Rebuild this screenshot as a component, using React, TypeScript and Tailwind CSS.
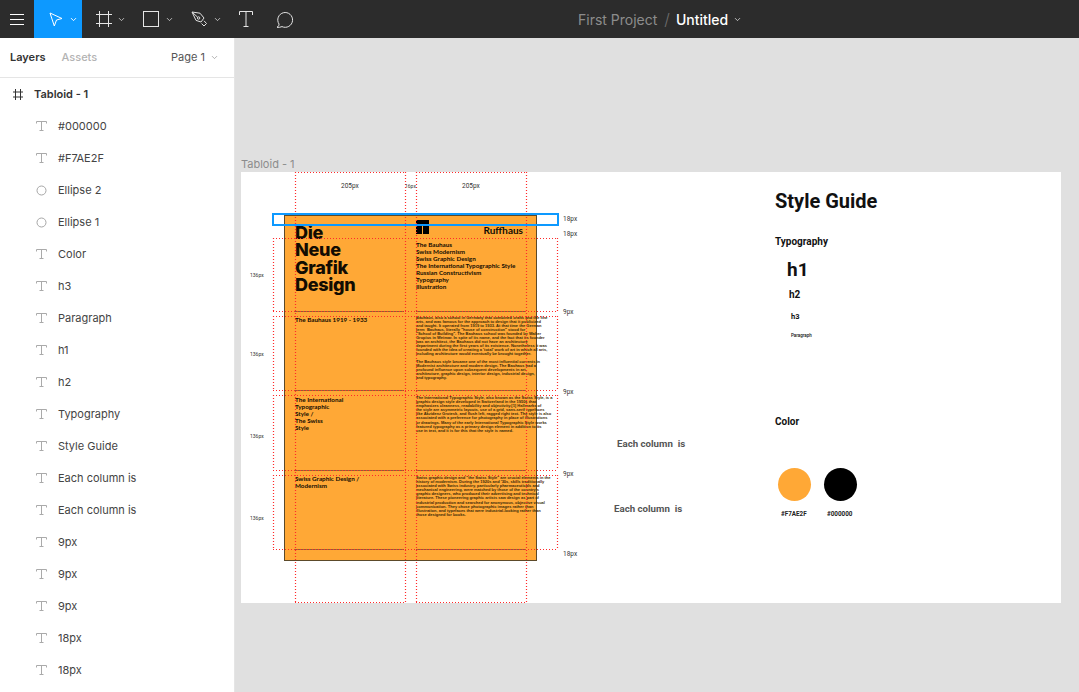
import { ChevronDown } from 'lucide-react'

type Layer = { name: string; kind: 'text' | 'ellipse' }

const LAYERS: Layer[] = [
  { name: '#000000', kind: 'text' },
  { name: '#F7AE2F', kind: 'text' },
  { name: 'Ellipse 2', kind: 'ellipse' },
  { name: 'Ellipse 1', kind: 'ellipse' },
  { name: 'Color', kind: 'text' },
  { name: 'h3', kind: 'text' },
  { name: 'Paragraph', kind: 'text' },
  { name: 'h1', kind: 'text' },
  { name: 'h2', kind: 'text' },
  { name: 'Typography', kind: 'text' },
  { name: 'Style Guide', kind: 'text' },
  { name: 'Each column is', kind: 'text' },
  { name: 'Each column is', kind: 'text' },
  { name: '9px', kind: 'text' },
  { name: '9px', kind: 'text' },
  { name: '9px', kind: 'text' },
  { name: '18px', kind: 'text' },
  { name: '18px', kind: 'text' },
]

const LIST = [
  'The Bauhaus',
  'Swiss Modernism',
  'Swiss Graphic Design',
  'The International Typographic Style',
  'Russian Constructivism',
  'Typography',
  'Illustration',
]

const BAUHAUS = [
  'Bauhaus, also a school in Germany that combined crafts and the fine',
  'arts, and was famous for the approach to design that it publicized',
  'and taught. It operated from 1919 to 1933. At that time the German',
  'term  Bauhaus, literally "house of construction" stood for',
  '"School of Building". The Bauhaus school was founded by Walter',
  'Gropius in Weimar. In spite of its name, and the fact that its founder',
  'was an architect, the Bauhaus did not have an architecture',
  'department during the first years of its existence. Nonetheless it was',
  "founded with the idea of creating a 'total' work of art in which all arts,",
  'including architecture would eventually be brought together.',
]

const BAUHAUS_2 = [
  'The Bauhaus style became one of the most influential currents in',
  'Modernist architecture and modern design. The Bauhaus had a',
  'profound influence upon subsequent developments in art,',
  'architecture, graphic design, interior design, industrial design,',
  'and typography.',
]

const INTERNATIONAL = [
  'The International Typographic Style, also known as the Swiss Style, is a',
  'graphic design style developed in Switzerland in the 1950s that',
  'emphasizes cleanness, readability and objectivity.[1] Hallmarks of',
  'the style are asymmetric layouts, use of a grid, sans-serif typefaces',
  'like Akzidenz Grotesk, and flush left, ragged right text. The style is also',
  'associated with a preference for photography in place of illustrations',
  'or drawings. Many of the early International Typographic Style works',
  'featured typography as a primary design element in addition to its',
  'use in text, and it is for this that the style is named.',
]

const SWISS = [
  'Swiss graphic design and "the Swiss Style" are crucial elements in the',
  'history of modernism. During the 1920s and \'30s, skills traditionally',
  'associated with Swiss industry, particularly pharmaceuticals and',
  "mechanical engineering, were matched by those of the country's",
  'graphic designers, who produced their advertising and technical',
  'literature. These pioneering graphic artists saw design as part of',
  'industrial production and searched for anonymous, objective visual',
  'communication. They chose photographic images rather than',
  'illustration, and typefaces that were industrial-looking rather than',
  'those designed for books.',
]

const GUIDE_ROWS = [
  [238, 311],
  [316, 390],
  [395, 470],
  [475, 549],
]

const GUIDE_COLS = [295, 405, 416, 526]

function Small({ lines }: { lines: string[] }) {
  return (
    <p className="text-[4px] leading-[4.1px] font-bold text-[#3a2808] whitespace-pre font-['Liberation_Sans',sans-serif]">
      {lines.map((l, i) => (
        <span key={i} className="block">
          {l}
        </span>
      ))}
    </p>
  )
}

function Rule() {
  return (
    <div className="flex gap-[12px] h-px">
      <div className="w-[109px] bg-[#8f6230]" />
      <div className="w-[110px] bg-[#8f6230]" />
    </div>
  )
}

function Toolbar() {
  return (
    <header className="h-[38px] shrink-0 bg-[#2c2c2c] flex items-center text-white relative">
      <div className="w-[34px] h-full flex items-center justify-center">
        <svg width="14" height="11" viewBox="0 0 14 11" stroke="#fff" fill="none">
          <path d="M0 .5h14M0 5.5h14M0 10.5h14" />
        </svg>
      </div>
      <div className="w-[48px] h-full bg-[#0d99ff] flex items-center pl-[15px] gap-[6px]">
        <svg width="14" height="15" viewBox="0 0 14 15" fill="none" stroke="#fff">
          <path d="M1 1 13 6.5 7.5 8 5.3 14Z" />
        </svg>
        <ChevronDown size={9} strokeWidth={2.5} />
      </div>
      <svg width="16" height="16" viewBox="0 0 16 16" fill="none" stroke="#e6e6e6" className="ml-[14px]">
        <path d="M3.5 0v16M12.5 0v16M0 3.5h16M0 12.5h16" />
      </svg>
      <ChevronDown size={9} strokeWidth={2} className="ml-[5px] text-[#e0e0e0]" />
      <svg width="16" height="16" viewBox="0 0 16 16" fill="none" stroke="#e6e6e6" className="ml-[17px]">
        <rect x="0.5" y="0.5" width="15" height="15" />
      </svg>
      <ChevronDown size={9} strokeWidth={2} className="ml-[6px] text-[#e0e0e0]" />
      <svg width="16" height="16" viewBox="0 0 16 16" fill="none" stroke="#e0e0e0" className="ml-[17px]">
        <path d="M1 1 9 2.2 13 7 10 11 5 9.4Z M1 1 6.6 6.2 M10.5 12.5 13 15 15.5 12.5 13 9.8" />
        <circle cx="7.6" cy="7" r="1.2" />
      </svg>
      <ChevronDown size={9} strokeWidth={2} className="ml-[6px] text-[#e0e0e0]" />
      <svg width="14" height="16" viewBox="0 0 14 16" fill="none" stroke="#e6e6e6" className="ml-[17px]">
        <path d="M.5 4V.5h13V4M7 .5v15M4.5 15.5h5" />
      </svg>
      <svg width="18" height="17" viewBox="0 0 18 17" fill="none" stroke="#e6e6e6" className="ml-[23px]">
        <path d="M1 16.3c1.4-.8 2.2-2 2-3.3A7.4 7.4 0 1 1 6 15.6c-1.5.7-3.3.9-5 .7Z" />
      </svg>
      <div className="absolute left-[578px] top-0 h-full flex items-center text-[14px] font-['Inter',sans-serif]">
        <span className="text-[#8c8c8c]">First Project</span>
        <span className="text-[#6e6e6e] ml-[7px] font-light text-[16px]">/</span>
        <span className="text-white ml-[6px] font-medium">Untitled</span>
        <ChevronDown size={9} strokeWidth={2} className="ml-[5px] text-[#e6e6e6]" />
      </div>
    </header>
  )
}

function Sidebar() {
  return (
    <aside className="w-[235px] shrink-0 bg-white border-r border-[#e5e5e5] font-['Inter',sans-serif] overflow-hidden">
      <div className="h-[40px] border-b border-[#e5e5e5] flex items-center pl-[10px] pr-[15px] text-[11px]">
        <span className="font-semibold text-[#333]">Layers</span>
        <span className="ml-[16px] font-medium text-[#b3b3b3]">Assets</span>
        <span className="ml-auto text-[#555]">Page 1</span>
        <ChevronDown size={9} className="ml-[5px] text-[#999]" />
      </div>
      <div className="h-[32px] flex items-center pl-[13px] text-[11px] font-semibold text-[#333]">
        <svg width="10" height="11" viewBox="0 0 10 11" fill="none" stroke="#333" className="mr-[11px]">
          <path d="M2.5 0v11M7.5 0v11M0 3h10M0 8h10" />
        </svg>
        Tabloid - 1
      </div>
      {LAYERS.map((layer, i) => (
        <div key={i} className="h-[32px] flex items-center pl-[36px] text-[11px] text-[#444]">
          {layer.kind === 'text' ? (
            <svg width="11" height="10" viewBox="0 0 11 10" fill="none" stroke="#aaa" className="mr-[11px]">
              <path d="M.5 2.5V.5h10v2M5.5.5v9M3.5 9.5h4" />
            </svg>
          ) : (
            <svg width="11" height="11" viewBox="0 0 11 11" fill="none" stroke="#a6a6a6" className="mr-[11px]">
              <circle cx="5.5" cy="5.5" r="4.5" />
            </svg>
          )}
          <span>{layer.name}</span>
        </div>
      ))}
    </aside>
  )
}

function Poster() {
  return (
    <div className="absolute left-[284px] top-[177px] w-[253px] h-[346px] bg-[#ffa836] border border-[#5c4a2a] font-['Lato',sans-serif] text-[#120c02] pl-[10px]">
      <div className="h-[95px] grid grid-cols-[121px_107px]">
        <h1 className="pt-[8px] text-[18px] leading-[17.4px] font-extrabold tracking-[-0.3px] font-['Inter',sans-serif]">
          Die
          <br />
          Neue
          <br />
          Grafik
          <br />
          Design
        </h1>
        <div className="pt-[4px]">
          <div className="flex items-end justify-between h-[14px]">
            <div className="w-[13px] h-[14px] flex flex-col gap-px">
              <div className="h-[5px] bg-black" />
              <div className="flex-1 flex gap-px">
                <div className="flex-1 bg-black" />
                <div className="flex-1 bg-black" />
              </div>
            </div>
            <span className="text-[10px] leading-[10px] font-bold translate-y-px">Ruffhaus</span>
          </div>
          <ul className="mt-[7px] text-[6.3px] leading-[7px] font-bold whitespace-nowrap">
            {LIST.map(item => (
              <li key={item}>{item}</li>
            ))}
          </ul>
        </div>
      </div>
      <Rule />
      <div className="h-[78px] grid grid-cols-[121px_110px]">
        <h2 className="pt-[4px] text-[6.3px] leading-[7px] font-bold">The Bauhaus 1919 - 1933</h2>
        <div className="pt-[3.5px]">
          <Small lines={BAUHAUS} />
          <div className="h-[3.5px]" />
          <Small lines={BAUHAUS_2} />
        </div>
      </div>
      <Rule />
      <div className="h-[79px] grid grid-cols-[121px_110px]">
        <h2 className="pt-[5px] text-[6.3px] leading-[7px] font-bold">
          The International
          <br />
          Typographic
          <br />
          Style /
          <br />
          The Swiss
          <br />
          Style
        </h2>
        <div className="pt-[5px]">
          <Small lines={INTERNATIONAL} />
        </div>
      </div>
      <Rule />
      <div className="h-[78px] grid grid-cols-[121px_110px]">
        <h2 className="pt-[4px] text-[6.3px] leading-[7px] font-bold">
          Swiss Graphic Design /
          <br />
          Modernism
        </h2>
        <div className="pt-[5px]">
          <Small lines={SWISS} />
        </div>
      </div>
      <Rule />
    </div>
  )
}

function Label({ className, children }: { className: string; children: string }) {
  return <span className={`absolute leading-[8px] text-[#333] whitespace-nowrap ${className}`}>{children}</span>
}

function Canvas() {
  return (
    <div className="relative flex-1 bg-[#e0e0e0] overflow-hidden font-['Roboto',sans-serif]">
      {/* items below are placed in window x, canvas y */}
      <div className="absolute -left-[235px] top-0 w-[1079px] h-[654px]">
        <span className="absolute left-[241px] top-[119px] text-[11px] leading-[14px] text-[#8c8c8c] font-['Inter',sans-serif]">
          Tabloid - 1
        </span>
        <div className="absolute left-[241px] top-[134px] w-[820px] h-[431px] bg-white" />
        <Poster />

        {/* layout guides */}
        <svg className="absolute left-0 top-0" width="1079" height="654" fill="none" stroke="#ff2a2a" strokeWidth="1.2" strokeDasharray="1 2">
          {GUIDE_COLS.map(x => (
            <line key={x} x1={x + 0.5} y1={134} x2={x + 0.5} y2={565} />
          ))}
          <line x1={295} y1={134.5} x2={405} y2={134.5} />
          <line x1={416} y1={134.5} x2={526} y2={134.5} />
          <line x1={295} y1={564.5} x2={405} y2={564.5} />
          <line x1={416} y1={564.5} x2={526} y2={564.5} />
          {GUIDE_ROWS.map(([a, b]) => (
            <g key={a}>
              <line x1={273} y1={a - 37.5} x2={557} y2={a - 37.5} />
              <line x1={273} y1={b - 37.5} x2={557} y2={b - 37.5} />
              <line x1={273.5} y1={a - 38} x2={273.5} y2={b - 38} />
              <line x1={557.5} y1={a - 38} x2={557.5} y2={b - 38} />
            </g>
          ))}
        </svg>

        {/* selected layer */}
        <div className="absolute left-[272px] top-[175px] w-[287px] h-[13px] border-2 border-[#0d99ff]" />

        <Label className="left-[341px] top-[144px] text-[6.5px]">205px</Label>
        <Label className="left-[405px] top-[144px] text-[5px]">16px</Label>
        <Label className="left-[462px] top-[144px] text-[6.5px]">205px</Label>
        <Label className="left-[563px] top-[177px] text-[6.5px]">18px</Label>
        <Label className="left-[563px] top-[192px] text-[6.5px]">18px</Label>
        <Label className="left-[563px] top-[270px] text-[6.5px]">9px</Label>
        <Label className="left-[563px] top-[350px] text-[6.5px]">9px</Label>
        <Label className="left-[563px] top-[432px] text-[6.5px]">9px</Label>
        <Label className="left-[563px] top-[512px] text-[6.5px]">18px</Label>
        <Label className="left-[250px] top-[233px] text-[5px]">136px</Label>
        <Label className="left-[250px] top-[312px] text-[5px]">136px</Label>
        <Label className="left-[250px] top-[394px] text-[5px]">136px</Label>
        <Label className="left-[250px] top-[476px] text-[5px]">136px</Label>

        <span className="absolute left-[617px] top-[400px] text-[9.7px] leading-[12px] font-bold text-[#555] whitespace-pre">Each column  is</span>
        <span className="absolute left-[614px] top-[465px] text-[9.7px] leading-[12px] font-bold text-[#555] whitespace-pre">Each column  is</span>

        <h2 className="absolute left-[775px] top-[150px] text-[20px] leading-[26px] font-bold text-[#111]">Style Guide</h2>
        <h3 className="absolute left-[775px] top-[198px] text-[10px] leading-[12px] font-bold text-[#111]">Typography</h3>
        <span className="absolute left-[787px] top-[220px] text-[19px] leading-[24px] font-bold text-[#111]">h1</span>
        <span className="absolute left-[789px] top-[251px] text-[10px] leading-[12px] font-bold text-[#111]">h2</span>
        <span className="absolute left-[791px] top-[274px] text-[7.5px] leading-[9px] font-bold text-[#111]">h3</span>
        <span className="absolute left-[791px] top-[295px] text-[4.5px] leading-[6px] font-medium text-[#111]">Paragraph</span>
        <h3 className="absolute left-[775px] top-[378px] text-[10px] leading-[12px] font-bold text-[#111]">Color</h3>
        <div className="absolute left-[778px] top-[430px] w-[33px] h-[33px] rounded-full bg-[#ffa836]" />
        <div className="absolute left-[824px] top-[430px] w-[33px] h-[33px] rounded-full bg-black" />
        <span className="absolute left-[781px] top-[472px] text-[6.3px] leading-[8px] font-bold text-[#222]">#F7AE2F</span>
        <span className="absolute left-[827px] top-[472px] text-[6.3px] leading-[8px] font-bold text-[#222]">#000000</span>
      </div>
    </div>
  )
}

export default function App() {
  return (
    <div className="w-[1079px] h-[692px] flex flex-col overflow-hidden">
      <Toolbar />
      <div className="flex flex-1 min-h-0">
        <Sidebar />
        <Canvas />
      </div>
    </div>
  )
}
